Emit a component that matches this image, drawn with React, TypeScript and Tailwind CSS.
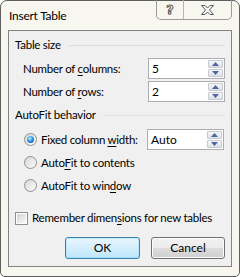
import React from "react";

const font = "font-['Lato','Roboto',sans-serif] text-[11.5px] tracking-[-0.25px] whitespace-nowrap";

function Arrow({ up }: { up?: boolean }) {
  return (
    <svg width="7" height="4" viewBox="0 0 7 4">
      {up ? <polygon points="0,4 7,4 3.5,0" fill="#4a67a5" /> : <polygon points="0,0 7,0 3.5,4" fill="#4a67a5" />}
    </svg>
  );
}

function Spin({ value }: { value: string }) {
  return (
    <div className="w-[77px] h-[21px] border border-[#abadb3] bg-white flex items-center">
      <div className="flex-1 pl-[3px] text-[12px] tracking-normal leading-none text-black">{value}</div>
      <div className="mr-[1px] flex flex-col gap-[1px] w-[15px]">
        <div className="h-[8px] border border-[#c6cbd3] rounded-[1px] bg-gradient-to-b from-[#f7f7f7] to-[#dfe1e4] flex items-center justify-center">
          <Arrow up />
        </div>
        <div className="h-[8px] border border-[#c6cbd3] rounded-[1px] bg-gradient-to-b from-[#f7f7f7] to-[#dfe1e4] flex items-center justify-center">
          <Arrow />
        </div>
      </div>
    </div>
  );
}

function Radio({ checked }: { checked?: boolean }) {
  return (
    <div className="shrink-0 w-[13px] h-[13px] rounded-full border border-[#8f8f8f] bg-gradient-to-br from-[#d8d8d8] to-[#fbfbfb] flex items-center justify-center">
      {checked && (
        <div className="w-[7px] h-[7px] rounded-full bg-[radial-gradient(circle_at_40%_35%,#b9ecff,#2a8fde_50%,#0d4a8a)]" />
      )}
    </div>
  );
}

function Header({ text }: { text: string }) {
  return (
    <div className="h-4 flex items-center pl-[6px] pr-[6px]">
      <span className="leading-4 text-black">{text}</span>
      <div className="flex-1 h-px bg-[#d5dfe5] ml-[8px]" />
    </div>
  );
}

export default function App() {
  return (
    <div className={`w-[240px] h-[277px] bg-white ${font}`}>
      <div className="relative w-[240px] h-[277px] border border-[#5e5e5e] rounded-t-[7px] rounded-b-[5px] bg-[#f7f7ef] flex flex-col px-[7px] pb-[9px]">
        <div className="h-[29px] flex items-center pl-[1px] pt-[1px] text-black text-[12px]">Insert Table</div>
        <div className="absolute top-[-1px] right-[7px] w-[76px] h-[20px] border border-t-0 border-[#9a9a9a] rounded-b-[5px] flex">
          <div className="w-[27px] border-r border-[#b5b5b5] flex items-center justify-center">
            <span className="font-['DejaVu_Sans',sans-serif] text-[13px] font-bold leading-none text-white [-webkit-text-stroke:1px_#5a5a5a]">?</span>
          </div>
          <div className="flex-1 flex items-center justify-center pt-[1px]">
            <svg width="13" height="10" viewBox="0 0 13 10">
              <polygon
                points="0.5,0.5 4,0.5 6.5,3 9,0.5 12.5,0.5 8.5,5 12.5,9.5 9,9.5 6.5,7 4,9.5 0.5,9.5 4.5,5"
                fill="#f4f4f4"
                stroke="#5a5a5a"
                strokeWidth="1"
                strokeLinejoin="round"
              />
            </svg>
          </div>
        </div>
        <div className="flex-1 border border-[#838383] bg-[#f0f0f0] flex flex-col pt-[6px] text-black">
          <Header text="Table size" />
          <div className="mt-[5px] flex items-center justify-between pl-[14px] pr-[6px] h-[21px]">
            <span>Number of <u className="underline-offset-2">c</u>olumns:</span>
            <Spin value="5" />
          </div>
          <div className="mt-[2px] flex items-center justify-between pl-[14px] pr-[6px] h-[21px]">
            <span>Number of <u className="underline-offset-2">r</u>ows:</span>
            <Spin value="2" />
          </div>
          <div className="mt-[5px]">
            <Header text="AutoFit behavior" />
          </div>
          <div className="mt-[5px] h-[23px] flex items-center pl-[15px] pr-[7px]">
            <Radio checked />
            <span className="ml-[4px] flex-1">Fixed column <u className="underline-offset-2">w</u>idth:</span>
            <Spin value="Auto" />
          </div>
          <div className="h-[23px] flex items-center pl-[15px]">
            <Radio />
            <span className="ml-[4px]">Auto<u className="underline-offset-2">F</u>it to contents</span>
          </div>
          <div className="h-[23px] flex items-center pl-[15px]">
            <Radio />
            <span className="ml-[4px]">AutoFit to win<u className="underline-offset-2">d</u>ow</span>
          </div>
          <div className="mt-[13px] h-4 flex items-center pl-[6px]">
            <div className="shrink-0 w-[13px] h-[13px] border border-[#8f8f8f] bg-white p-[1px]">
              <div className="w-full h-full bg-gradient-to-br from-[#d6d6d6] to-[#f6f6f6]" />
            </div>
            <span className="ml-[4px]">Remember dimen<u className="underline-offset-2">s</u>ions for new tables</span>
          </div>
          <div className="mt-[11px] flex justify-end gap-[11px] pr-[6px]">
            <button className="w-[75px] h-[22px] rounded-[3px] border border-[#3c7fb1] bg-gradient-to-b from-[#eaf6fd] to-[#bee6fd] shadow-[inset_0_0_0_1px_#48d7fd40] text-black text-[12px] tracking-normal">
              OK
            </button>
            <button className="w-[74px] h-[22px] rounded-[3px] border border-[#707070] bg-[linear-gradient(#f2f2f2_0%,#ebebeb_50%,#dddddd_51%,#cfcfcf_100%)] shadow-[inset_0_0_0_1px_#fcfcfc] text-black text-[12px] tracking-normal">
              Cancel
            </button>
          </div>
        </div>
      </div>
    </div>
  );
}
